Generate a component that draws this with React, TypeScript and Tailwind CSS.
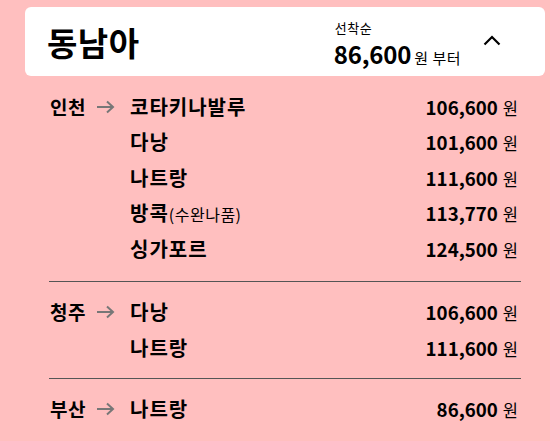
import React from "react";

const font = { fontFamily: '"Noto Sans CJK KR", "Noto Sans", sans-serif' };

type Route = { dest: string; sub?: string; price: string };
type Group = { origin: string; routes: Route[] };

const groups: Group[] = [
  {
    origin: "인천",
    routes: [
      { dest: "코타키나발루", price: "106,600" },
      { dest: "다낭", price: "101,600" },
      { dest: "나트랑", price: "111,600" },
      { dest: "방콕", sub: "(수완나품)", price: "113,770" },
      { dest: "싱가포르", price: "124,500" },
    ],
  },
  {
    origin: "청주",
    routes: [
      { dest: "다낭", price: "106,600" },
      { dest: "나트랑", price: "111,600" },
    ],
  },
  {
    origin: "부산",
    routes: [{ dest: "나트랑", price: "86,600" }],
  },
];

function ChevronUp() {
  return (
    <svg width="18" height="12" viewBox="0 0 18 12">
      <path d="M1.5 10.5L9 3l7.5 7.5" stroke="#000" strokeWidth="2.2" fill="none" />
    </svg>
  );
}

function Arrow() {
  return (
    <svg width="19" height="14" viewBox="0 0 19 14">
      <path
        d="M1 7h16M11 1.5L17 7l-6 5.5"
        stroke="#777"
        strokeWidth="2"
        fill="none"
      />
    </svg>
  );
}

export default function App() {
  return (
    <div className="w-[550px] h-[441px] bg-[#ffbfbf] overflow-hidden pt-[7px] text-black" style={font}>
      <div className="ml-[25px] w-[520px] h-[69px] bg-white rounded-[6px] flex items-center pl-[22px] pr-[44px]">
        <div className="text-[33px] font-bold tracking-[0.5px] leading-none mt-[2px]">동남아</div>
        <div className="ml-auto self-start mt-[11px] flex flex-col">
          <span className="text-[13px] leading-[19px] ml-[1px] tracking-[0.5px]">선착순</span>
          <div className="flex items-baseline leading-[34px]">
            <span className="text-[24px] font-bold tracking-[-0.2px]">86,600</span>
            <span className="text-[15px] ml-[3px] tracking-[0.5px]">원 부터</span>
          </div>
        </div>
        <div className="ml-[22px] mt-[-4px]">
          <ChevronUp />
        </div>
      </div>

      <div className="ml-[49px] w-[472px] mt-[13px]">
        {groups.map((g, gi) => (
          <div
            key={g.origin}
            className={
              gi === 0
                ? "pb-[14px]"
                : gi === 1
                ? "border-t border-[#555] pt-[13px] pb-[12px]"
                : "border-t border-[#555] pt-[13px]"
            }
          >
            {g.routes.map((r, ri) => (
              <div key={r.dest + ri} className="flex items-center h-[35.5px]">
                <div className="w-[47px] pl-[1px] text-[19px] font-bold tracking-[0.5px]">
                  {ri === 0 ? g.origin : ""}
                </div>
                <div className="w-[34px] flex items-center">
                  {ri === 0 && <Arrow />}
                </div>
                <div className="text-[20px] font-bold tracking-[1px] flex items-baseline">
                  {r.dest}
                  {r.sub && (
                    <span className="text-[16px] font-normal tracking-[0.5px]">{r.sub}</span>
                  )}
                </div>
                <div className="ml-auto flex items-baseline pr-[3px]">
                  <span className="text-[18.7px] font-bold">{r.price}</span>
                  <span className="text-[16.5px] ml-[5px]">원</span>
                </div>
              </div>
            ))}
          </div>
        ))}
      </div>
    </div>
  );
}
